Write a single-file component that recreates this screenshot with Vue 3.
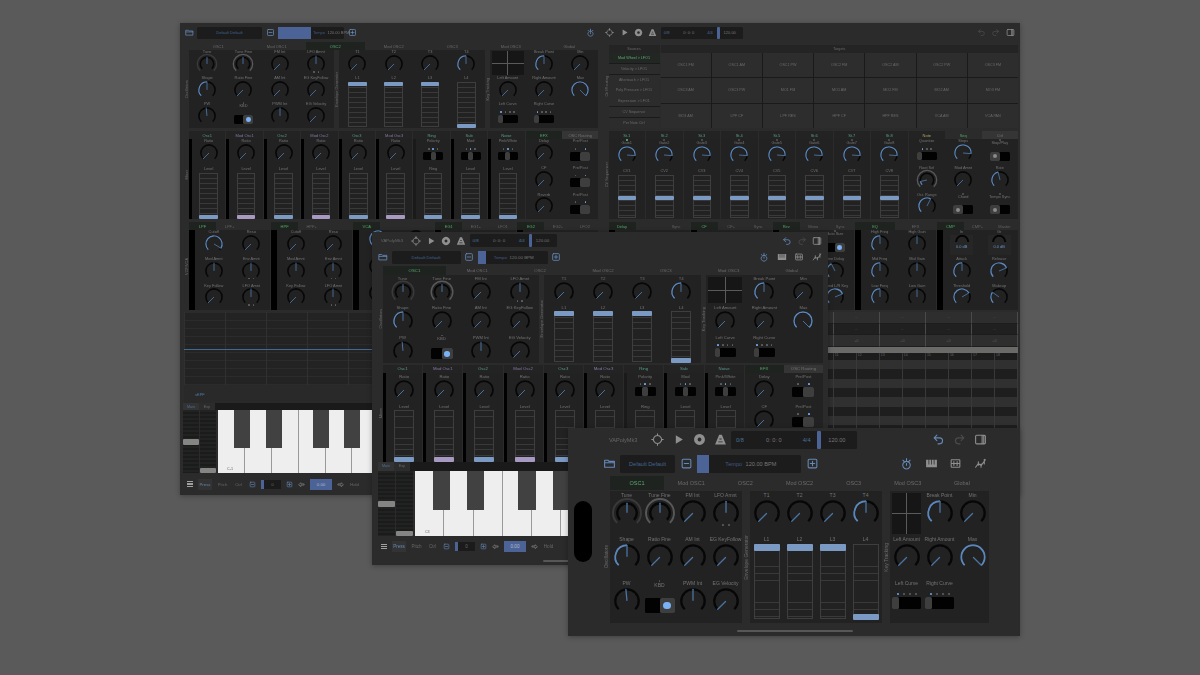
<script setup>
const K = (k, v = 0, o = {}) => ({ type: 'knob', k, v, ...o })
const F = (k, pos, tone = 'blue', o = {}) => ({ type: 'fader', k, pos, tone, ...o })
const T = (k, pos, o = {}) => ({ type: 'toggle', k, pos, ...o })
const DOTS2 = { under: [0, 0] }

const icons = {
  folder: 'M3 6h6l2 2h10v11H3z M3 10.5h18',
  minus: 'M6 4h12a2 2 0 0 1 2 2v12a2 2 0 0 1-2 2H6a2 2 0 0 1-2-2V6a2 2 0 0 1 2-2z M8 12h8',
  plus: 'M6 4h12a2 2 0 0 1 2 2v12a2 2 0 0 1-2 2H6a2 2 0 0 1-2-2V6a2 2 0 0 1 2-2z M8 12h8 M12 8v8',
  loop: 'M12 4.5a7.5 7.5 0 1 1-.01 0z M12 1.5v3 M12 19.5v3 M1.5 12h3 M19.5 12h3',
  undo: 'M9 4L4 9l5 5 M4 9h10a5.500 5.500 0 0 1 0 11h-3',
  redo: 'M15 4l5 5-5 5 M20 9H10a5.500 5.500 0 0 0 0 11h3',
  panel: 'M5 4h14a2 2 0 0 1 2 2v12a2 2 0 0 1-2 2H5a2 2 0 0 1-2-2V6a2 2 0 0 1 2-2z M15 4v16 M18 4v16',
  timer: 'M12 8a7 7 0 1 1-.01 0z M12 8V3 M5.500 6l2.500 2.500 M18.500 6L16 8.500 M12 15v-3',
  boxes: 'M5 5h14a1 1 0 0 1 1 1v12a1 1 0 0 1-1 1H5a1 1 0 0 1-1-1V6a1 1 0 0 1 1-1z M4 12h16 M9 8.500v7 M15 8.500v7',
  auto: 'M3 19l5-7 5 4 8-11 M8 9v6 M13 13v6 M19 4v9',
  left: 'M3 12l7-6v4h11v4H10v4z',
  right: 'M21 12l-7-6v4H3v4h11v4z',
}
const solids = {
  play: 'M7 4l13 8-13 8z',
  rec: 'M12 2a10 10 0 1 0 .01 0z M12 8.500a3.500 3.500 0 1 1-.01 0z',
  metro: 'M9.500 3h5L22 21H2z M8 15.500h8v1.800H8z M10 10h4v1.800h-4z',
  piano: 'M2 5h20v14H2z M6.500 5h1.400v9H6.500z M11.300 5h1.400v9h-1.400z M16.100 5h1.400v9h-1.400z',
}
const ic = (i, cls = '', c = '') => ({ i, cls, c })

const barLeft = [ic('folder', '', 'blue'), { kind: 'preset' }, ic('minus', '', 'blue'), { kind: 'tempo' }, ic('plus', '', 'blue')]
const transportGroup = [ic('loop', 'wide'), ic('play', 'wide'), ic('rec', 'wide'), ic('metro', 'wide'), { kind: 'trans' }]
const undoGroup = [ic('undo', 'wide', 'dim'), ic('redo', 'wide', 'dim'), ic('panel', 'wide')]
const undoGroupActive = [ic('undo', 'wide', 'blue'), ic('redo', 'wide', 'dim'), ic('panel', 'wide')]
const rightIcons = [ic('timer', '', 'blue'), ic('piano', 'wide'), ic('boxes', 'wide'), ic('auto', 'wide')]

const oscCells = [
  K('Tune', 0.5, { ring: 'faint' }), K('Tune Fine', 0.5, { ring: 'strong' }), K('FM Int'), K('LFO Amnt', 0.5, DOTS2),
  K('Shape', 0.5, { arc: 1 }), K('Ratio Fine'), K('AM Int'), K('EG KeyFollow'),
  K('PW', 0.48), T('KBD', 'r', { size: 'lg', led: 1 }), K('PWM Int', 0.5), K('EG Velocity'),
]
const envCells = [
  K('T1'), K('T2'), K('T3'), K('T4', 0.5, { arc: 1 }),
  F('L1', 'top', 'blue', { span: 1 }), F('L2', 'top', 'blue', { span: 1 }), F('L3', 'top', 'blue', { span: 1 }), F('L4', 'bot', 'blue', { span: 1 }),
]
const keyCells = [
  { type: 'xy' }, K('Break Point', 0.5, { arc: 1 }), K('Min'),
  K('Left Amount'), K('Right Amount'), K('Max', 1, { arc: 1 }),
  T('Left Curve', 'l', { dots: [1, 0, 0, 0] }), T('Right Curve', 'l', { dots: [1, 0, 0, 0] }), { type: 'empty' },
]
const oscRow = {
  kind: 'row', cls: 'sec-osc',
  parts: [
    { label: 'Oscillators', f: 'f4', cols: 4, rows: 'r3', cells: oscCells },
    { label: 'Envelope Generator', f: 'f4', cols: 4, rows: 'r3', cells: envCells },
    { label: 'Key Tracking', f: 'f3', cols: 3, rows: 'r3', cells: keyCells },
  ],
}
const oscTabs = (on) => ({
  kind: 'tabs',
  items: ['OSC1', 'Mod OSC1', 'OSC2', 'Mod OSC2', 'OSC3', 'Mod OSC3', 'Global'].map((t) => ({ t, on: t === on })),
})

const chan = (t, c, tone, first) => ({
  f: 'f1', strip: 'thin', tabs: [{ t, c }], cols: 1, rows: 'rc',
  cells: [first, F('Level', 'bot', tone)],
})
const mixerParts = () => {
  const list = [
    chan('Osc1', 'teal', 'blue', K('Ratio')), chan('Mod Osc1', 'purple', 'purple', K('Ratio')),
    chan('Osc2', 'teal', 'blue', K('Ratio')), chan('Mod Osc2', 'purple', 'purple', K('Ratio')),
    chan('Osc3', 'teal', 'blue', K('Ratio')), chan('Mod Osc3', 'purple', 'purple', K('Ratio')),
    { f: 'f1', strip: 'faint', tabs: [{ t: 'Ring', c: 'teal' }], cols: 1, rows: 'rc', cells: [T('Polarity', 'm', { dots: [0, 1, 0] }), F('Ring', 'bot')] },
    chan('Sub', 'teal', 'blue', T('Mod', 'm', { dots: [0, 1, 0] })),
    chan('Noise', 'teal', 'blue', T('Pink/White', 'm', { dots: [0, 1, 0] })),
    {
      f: 'f2', tabs: [{ t: 'EFX', c: 'green', on: 1 }, { t: 'OSC Routing', c: 'lite' }], cols: 2, rows: 'r3',
      cells: [
        K('Delay'), T('Pre/Post', 'r', { dots: [0, 1], size: 'md' }),
        K('CF'), T('Pre/Post', 'r', { dots: [0, 1], size: 'md' }),
        K('Reverb'), T('Pre/Post', 'r', { dots: [0, 1], size: 'md' }),
      ],
    },
  ]
  list[0].label = 'Mixer'
  return list
}
const mixRow = () => ({ kind: 'row', cls: 'sec-mix tight', parts: mixerParts() })

const filterCells = (v, arc) => [
  K('Cutoff', v, { arc }), K('Reso'), K('Mod Amnt', 0.5), K('Env Amnt', 0.5, DOTS2), K('Key Follow'), K('LFO Amnt', 0.5, DOTS2),
]
const shut = (tabs, cells = []) => ({ f: 'f1', strip: 'wide', tabs, cols: 2, rows: 'r3', cells })
const act = (t) => ({ t, c: 'green', on: 1 })
const filterRow = {
  kind: 'row', cls: 'sec-mix tight',
  parts: [
    { ...shut([act('LPF'), { t: 'LPF+' }, { t: '' }], filterCells(0.95, 1)), label: 'VCF/VCA' },
    shut([act('HPF'), { t: 'HPF+' }, { t: '' }], filterCells(0)),
    shut([act('VCA'), { t: '' }, { t: '' }], [K('', 0.6, { arc: 1 }), K('', 0), K('', 0.5), K('', 0.5), K('', 0), K('', 0)]),
    shut([act('EG1'), { t: 'EG1+' }, { t: 'LFO1' }]),
    shut([act('EG2'), { t: 'EG2+' }, { t: 'LFO2' }]),
  ],
}
const graph = { kind: 'graph' }
const lane = { kind: 'lane' }
const keyboard = (note) => ({
  kind: 'keyboard', note,
  whites: Array.from({ length: 8 }),
  blacks: [0.6, 1.78, 3.53, 4.7, 6.6, 7.78],
})
const playBar = { kind: 'playbar' }

const sources = ['Mod Wheel > LFO1', 'Velocity > LFO1', 'Aftertouch > LFO1', 'Poly Pressure > LFO1', 'Expression > LFO1', 'CV Sequence', 'Per Note Ctrl']
const targets = ['OSC1 FM', 'OSC1 AM', 'OSC1 PW', 'OSC2 FM', 'OSC2 AM', 'OSC2 PW', 'OSC3 FM', 'OSC3 AM', 'OSC3 PW', 'MO1 FM', 'MO1 AM', 'MO2 FM', 'MO2 AM', 'MO3 FM', 'MO3 AM', 'LPF CF', 'LPF RES', 'HPF CF', 'HPF RES', 'VCA AM', 'VCA PAN']

const seqParts = () => {
  const list = [1, 2, 3, 4, 5, 6, 7, 8].map((n) => ({
    f: 'f1', tabs: [{ t: 'St.' + n, c: 'teal' }], cols: 1, rows: 'rs',
    cells: [K('Gate' + n, 0.85, { arc: 1, led: n === 1 ? 'on' : 'off' }), F('CV' + n, 'mid')],
  }))
  list[0].label = 'CV Sequencer'
  list.push({
    f: 'f3', tabs: [{ t: 'Note', c: 'yellow' }, { t: 'Seq', c: 'green' }, { t: 'Ctrl', c: 'lite' }], cols: 3, rows: 'r3',
    cells: [
      T('Quantize', 'l', { dots: [1, 0, 0] }), K('Steps', 0.85, { arc: 1 }), T('Stop/Play', 'l', { size: 'md', led: 1, dim: 1 }),
      K('Root Sel', 0.12, { ring: 'strong', arc: 1 }), K('Mod Amnt'), K('Rate', 0.45, { arc: 1 }),
      K('Oct. Range', 0.6, { arc: 1 }), T('Chord', 'l', { size: 'md', led: 1, dim: 1 }), T('Tempo Sync', 'l', { size: 'md', led: 1, dim: 1 }),
    ],
  })
  return list
}
const eq = {
  f: 'f1', strip: 'wide', tabs: [act('EQ'), { t: 'EFX' }], cols: 2, rows: 'r3',
  cells: [K('High Freq', 0.5, { arc: 1 }), K('High Gain', 0.5), K('Mid Freq', 0.5, { arc: 1 }), K('Mid Gain', 0.5), K('Low Freq', 0.5, { arc: 1 }), K('Low Gain', 0.5)],
}
const cmp = {
  f: 'f1', strip: 'wide', tabs: [act('CMP'), { t: 'CMP+' }, { t: 'Master' }], cols: 2, rows: 'r3',
  cells: [{ type: 'gauge', k: 'In', val: '0.0 dB' }, { type: 'gauge', k: 'Gr', val: '0.0 dB' }, K('Attack', 0.5, { arc: 1 }), K('Release', 0.75, { arc: 1 }), K('Threshold', 0.72, { arc: 1 }), K('Makeup', 0.3, { arc: 1 })],
}
const fxRow = {
  kind: 'row', cls: 'sec-mix tight',
  parts: [
    { ...shut([act('Delay'), { t: '' }, { t: 'Sync' }]), label: 'Effects' },
    shut([act('CF'), { t: 'CF+' }, { t: 'Sync' }]),
    shut([act('Rev'), { t: 'Mono' }, { t: 'Sync' }], [
      { type: 'empty' }, T('Auto Size', 'r', { size: 'lg', led: 1 }),
      { type: 'empty' }, K('Fine Delay', 0.4, { arc: 1 }),
      { type: 'empty' }, K('Sound L/R Key', 0.75, { arc: 1 }),
    ]),
    eq, cmp,
  ],
}
const table = { kind: 'table', cells: Array.from({ length: 27 }, (_, i) => (i > 17 ? '+0' : '--')) }
const roll = { kind: 'roll', heads: Array.from({ length: 18 }, (_, i) => String(i + 1)) }

const windows = [
  {
    cls: 'w1',
    bars: [[...barLeft, { kind: 'sp' }, ic('timer', '', 'blue'), ic('loop', 'wider'), ...transportGroup.slice(1), { kind: 'sp', cls: 'sp2' }, ...undoGroup]],
    columns: [
      [oscTabs('OSC2'), oscRow, mixRow(), filterRow, graph, lane, keyboard('C-1'), playBar],
      [{ kind: 'matrix' }, { kind: 'row', cls: 'sec-mix tight', parts: seqParts() }, fxRow, table, roll],
    ],
  },
  {
    cls: 'w2',
    bars: [
      [{ kind: 'title' }, ...transportGroup, { kind: 'sp' }, ...undoGroupActive],
      [...barLeft, { kind: 'sp' }, ...rightIcons],
    ],
    columns: [[oscTabs('OSC1'), oscRow, mixRow(), keyboard('C3'), playBar]],
    home: 1,
  },
  {
    cls: 'w3',
    pill: 1,
    bars: [
      [{ kind: 'title' }, ...transportGroup, { kind: 'sp' }, ...undoGroupActive],
      [...barLeft, { kind: 'sp' }, ...rightIcons],
    ],
    columns: [[oscTabs('OSC1'), oscRow]],
    home: 1,
  },
]

const polar = (r, a) => {
  const t = (a * Math.PI) / 180
  return [20 + r * Math.sin(t), 20 - r * Math.cos(t)]
}
const ang = (v) => -135 + 270 * v
const arc = (r, from, to) => {
  const a = ang(from)
  const b = ang(to)
  const [x1, y1] = polar(r, a)
  const [x2, y2] = polar(r, b)
  return `M${x1.toFixed(2)} ${y1.toFixed(2)}A${r} ${r} 0 ${b - a > 180 ? 1 : 0} 1 ${x2.toFixed(2)} ${y2.toFixed(2)}`
}
const pointer = (v, r) => {
  const [x1, y1] = polar(1, ang(v))
  const [x2, y2] = polar(r, ang(v))
  return `M${x1.toFixed(2)} ${y1.toFixed(2)}L${x2.toFixed(2)} ${y2.toFixed(2)}`
}
const radius = (c) => (c.ring ? 15 : 18)
</script>

<template>
  <div class="desk">
    <section v-for="w in windows" :key="w.cls" class="win" :class="w.cls">
      <div v-if="w.pill" class="pill"></div>
      <div v-for="(bar, bi) in w.bars" :key="bi" class="bar" :class="'bar' + (bi + 1)">
        <template v-for="(it, ii) in bar" :key="ii">
          <svg v-if="it.i" class="ic" :class="[it.cls, it.c]" viewBox="0 0 24 24">
            <path v-if="solids[it.i]" class="solid" fill-rule="evenodd" :d="solids[it.i]" />
            <path v-else class="line" :d="icons[it.i]" />
          </svg>
          <span v-else-if="it.kind === 'sp'" class="sp" :class="it.cls"></span>
          <span v-else-if="it.kind === 'title'" class="title">VAPolyMk3</span>
          <span v-else-if="it.kind === 'preset'" class="preset">Default Default</span>
          <span v-else-if="it.kind === 'tempo'" class="tempo">
            <i class="tfill"></i>
            <span class="ttext"><b>Tempo</b><span>120.00 BPM</span></span>
          </span>
          <span v-else-if="it.kind === 'trans'" class="trans">
            <b>0/8</b><span>0: 0: 0</span><b>4/4</b><i></i><span>120.00</span>
          </span>
        </template>
      </div>

      <div class="cols">
        <div v-for="(col, ci) in w.columns" :key="ci" class="col">
          <template v-for="(s, si) in col" :key="si">
            <div v-if="s.kind === 'tabs'" class="tabs">
              <span v-for="t in s.items" :key="t.t" class="tab" :class="{ on: t.on }">{{ t.t }}</span>
            </div>

            <div v-else-if="s.kind === 'row'" class="row" :class="s.cls">
              <template v-for="(m, mi) in s.parts" :key="mi">
                <div v-if="m.label" class="side"><span>{{ m.label }}</span></div>
                <div class="mod" :class="m.f">
                  <div v-if="m.tabs" class="mtabs">
                    <span v-for="(t, ti) in m.tabs" :key="ti" class="mtab" :class="[t.c, { on: t.on }]">{{ t.t }}</span>
                  </div>
                  <div class="mbody">
                    <i v-if="m.strip" class="strip" :class="m.strip"></i>
                    <div class="grid" :class="[m.rows, 'c' + m.cols]">
                      <div v-for="(c, i) in m.cells" :key="i" class="cell" :class="{ span: c.span }">
                        <i v-if="c.led" class="led" :class="c.led"></i>
                        <span v-if="c.k" class="lab">{{ c.k }}</span>

                        <svg v-if="c.type === 'knob'" class="knob" viewBox="0 0 40 40">
                          <path v-if="c.ring" class="kring" :class="c.ring" :d="arc(21.5, 0, 1)" />
                          <path class="ktrack" :d="arc(radius(c), 0, 1)" />
                          <path v-if="c.arc" class="kval" :d="arc(radius(c), 0, c.v)" />
                          <path class="kptr" :d="pointer(c.v, radius(c))" />
                        </svg>

                        <div v-else-if="c.type === 'fader'" class="fader">
                          <i class="thumb" :class="[c.pos, c.tone]"></i>
                        </div>

                        <template v-else-if="c.type === 'toggle'">
                          <div v-if="c.dots" class="dots" :class="c.size">
                            <i v-for="(d, di) in c.dots" :key="di" :class="{ lit: d }"></i>
                          </div>
                          <div class="tg" :class="[c.size, 'pos-' + c.pos, { nod: !c.dots }]">
                            <i class="tknob"><em v-if="c.led" :class="{ dim: c.dim }"></em></i>
                          </div>
                        </template>

                        <div v-else-if="c.type === 'xy'" class="xy">
                          <i></i><i></i><i></i><i></i>
                        </div>

                        <div v-else-if="c.type === 'gauge'" class="gauge">
                          <svg viewBox="0 0 40 22"><path d="M5 17A15 15 0 0 1 35 17" /></svg>
                          <span>{{ c.val }}</span>
                        </div>

                        <div v-if="c.under" class="dots under">
                          <i v-for="(d, di) in c.under" :key="di"></i>
                        </div>
                      </div>
                    </div>
                  </div>
                </div>
              </template>
            </div>

            <div v-else-if="s.kind === 'matrix'" class="matrix">
              <div class="side"><span>Ctrl Routing</span></div>
              <div class="msrc">
                <span class="mh">Sources</span>
                <span v-for="(x, i) in sources" :key="x" class="ms" :class="{ on: i === 0 }">{{ x }}</span>
              </div>
              <div class="mtg">
                <span class="mh">Targets</span>
                <div class="mcells"><span v-for="x in targets" :key="x">{{ x }}</span></div>
              </div>
            </div>

            <div v-else-if="s.kind === 'graph'" class="graph"></div>
            <div v-else-if="s.kind === 'lane'" class="lane"><span>sEPF</span></div>

            <div v-else-if="s.kind === 'keyboard'" class="kb">
              <div class="kbtabs"><span class="on">Main</span><span>Exp</span></div>
              <div class="kbbody">
                <div class="slider"><i class="sl-mid"></i></div>
                <div class="slider"><i class="sl-bot"></i></div>
                <div class="keys">
                  <span v-for="(x, i) in s.whites" :key="i" class="white"><em v-if="i === 0">{{ s.note }}</em></span>
                  <i v-for="b in s.blacks" :key="b" class="black" :style="{ left: `calc(var(--kw) * ${b})` }"></i>
                </div>
              </div>
            </div>

            <div v-else-if="s.kind === 'playbar'" class="playbar">
              <span class="menu"><i></i><i></i><i></i></span>
              <span class="pb on">Press</span><span class="pb">Pitch</span><span class="pb">Ctrl</span>
              <svg class="ic blue" viewBox="0 0 24 24"><path class="line" :d="icons.minus" /></svg>
              <i class="pbblue"></i><span class="pbbox">0</span>
              <svg class="ic blue" viewBox="0 0 24 24"><path class="line" :d="icons.plus" /></svg>
              <svg class="ic" viewBox="0 0 24 24"><path class="line" :d="icons.left" /></svg>
              <span class="pbval">0.00</span>
              <svg class="ic" viewBox="0 0 24 24"><path class="line" :d="icons.right" /></svg>
              <span class="pb">Hold</span>
            </div>

            <div v-else-if="s.kind === 'table'" class="table">
              <span v-for="(x, i) in s.cells" :key="i">{{ x }}</span>
            </div>

            <div v-else-if="s.kind === 'roll'" class="roll">
              <div class="rbar"></div>
              <div class="rhead"><span v-for="h in s.heads" :key="h">{{ h }}</span></div>
              <div class="rbody"></div>
            </div>
          </template>
        </div>
      </div>
      <div v-if="w.home" class="home"></div>
    </section>
  </div>
</template>

<style scoped>
.desk {
  position: relative;
  width: 1200px;
  height: 675px;
  overflow: hidden;
  background: #5a5a5a;
  font-family: "Liberation Sans", Arial, sans-serif;
}
i, em, b { font-style: normal; font-weight: normal; }

/* each window sits on the desktop at its own place */
.win {
  position: absolute;
  display: flex;
  flex-direction: column;
  overflow: hidden;
  background: #2b2b2b;
  box-shadow: 0 1px 5px rgba(0, 0, 0, .3);
  filter: blur(.65px);
}
.w1 {
  left: 180px; top: 23px; width: 840px; height: 472px;
  --pad-l: 4px; --pad-r: 2px; --k: 18px; --lf: 3.9px; --row: 26px; --side: 5px; --tab: 8px;
  --mixh: 88px; --sg: 3px; --cp: .4px; --kg: 0px; --fw: 16.5px; --th: 4px; --fl: 5px;
  --tw: 20px; --tht: 8px; --tk: 5px; --lgw: 19px; --lgh: 9px; --mdw: 20px; --mdh: 9px; --d: 1.5px; --dg: 2.800px;
  --lgmt: 6px; --dm: 4px; --bh1: 19px; --gap: 3.5px; --wa: 1.900px; --wb: 0px; --ic: 9px; --ctl: 12px; --preset: 65px; --tempo: 66px;
  --tfill: 33px; --trans: 82px; --title: 28px; --bf: 4px; --tabf: 4px; --rc: 28px; --rs: 30px;
  --kbt: 7px; --kbh: 63px; --kw: 26.900px; --sl: 16px; --pbh: 22px; --pbf: 4.300px;
}
.w2 {
  left: 372px; top: 232px; width: 456px; height: 333px;
  --pad-l: 6px; --pad-r: 5px; --k: 20px; --lf: 4.200px; --row: 29.300px; --side: 5px; --tab: 8px;
  --mixh: 97px; --sg: 2px; --cp: 1px; --kg: 1px; --fw: 18px; --th: 4.500px; --fl: 5.600px;
  --tw: 21px; --tht: 9px; --tk: 5.500px; --lgw: 22px; --lgh: 11px; --mdw: 22px; --mdh: 10px; --d: 1.700px; --dg: 3.100px;
  --lgmt: 7px; --dm: 4.500px; --bh1: 17px; --bh2: 16px; --gap: 3.5px; --wa: 1.500px; --wb: 4.200px; --ic: 10px; --ctl: 13px; --preset: 69px; --tempo: 70px;
  --tfill: 8px; --trans: 87px; --title: 28px; --bf: 4.400px; --tabf: 4.300px; --rc: 30px;
  --kbt: 9px; --kbh: 65px; --kw: 29.300px; --sl: 17px; --pbh: 21px; --pbf: 4.600px;
}
.w3 {
  left: 568px; top: 428px; width: 452px; height: 208px;
  --pad-l: 34px; --pad-r: 31px; --k: 26px; --lf: 5px; --row: 44px; --side: 8px; --tab: 14px;
  --mixh: 90px; --sg: 2px; --cp: 1px; --kg: 2px; --fw: 24px; --th: 6.500px; --fl: 7.200px;
  --tw: 29px; --tht: 12px; --tk: 7px; --lgw: 30px; --lgh: 15px; --mdw: 30px; --mdh: 15px; --d: 2px; --dg: 4px;
  --lgmt: 10px; --dm: 6.500px; --bh1: 23px; --bh2: 25px; --gap: 4.5px; --wa: 3.200px; --wb: 7px; --ic: 13px; --ctl: 18px; --preset: 55px; --tempo: 104px;
  --tfill: 12px; --trans: 126px; --title: 41.300px; --bf: 5.600px; --tabf: 5.500px; --rc: 30px;
  --kbt: 9px; --kbh: 65px; --kw: 30px; --sl: 17px; --pbh: 21px; --pbf: 5px;
}

.pill {
  position: absolute;
  left: 6px; top: 73px;
  width: 18px; height: 61px;
  border-radius: 9px;
  background: #000;
}
.home {
  position: absolute;
  bottom: 4px; right: 167px;
  width: 116px; height: 2px;
  border-radius: 1px;
  background: #575757;
}
.w2 .home { right: 70px; width: 215px; bottom: 3px; }

/* top bars */
.bar {
  display: flex;
  align-items: center;
  flex: none;
  gap: var(--gap);
}
.w1 .bar { padding: 0 5.500px 0 4.500px; }
.w2 .bar { padding: 0 6px; }
.w3 .bar { padding: 0 33.500px 0 34.500px; }
.bar1 { height: var(--bh1); }
.bar2 { height: var(--bh2); }
.sp { flex: 1; }
.sp2 { flex: 1.010; }
.ic { width: var(--ic); height: var(--ic); flex: none; color: #8f8f8f; overflow: visible; }
.ic.blue { color: #6489b8; }
.ic.dim { color: #4c4c4c; }
.line { fill: none; stroke: currentColor; stroke-width: 2; stroke-linejoin: round; stroke-linecap: round; }
.solid { fill: currentColor; }
.bar1 .wide { margin-left: var(--wa); }
.bar2 .wide { margin-left: var(--wb); }
.bar1 .wider { margin-left: 6.500px; }
.title { width: var(--title); text-align: center; color: #666; font-size: var(--bf); white-space: nowrap; flex: none; }
.preset {
  width: var(--preset); height: var(--ctl); flex: none;
  display: flex; align-items: center; justify-content: center;
  background: #1c1c1d; border-radius: 1.500px; color: #42648f; font-size: var(--bf);
}
.tempo {
  width: var(--tempo); height: var(--ctl); flex: none;
  display: flex; align-items: stretch;
  background: #1c1c1d; border-radius: 1.500px; color: #757575; font-size: var(--bf);
}
.tfill { width: var(--tfill); background: #4c6397; flex: none; }
.ttext { flex: 1; display: flex; align-items: center; justify-content: center; gap: .6em; padding-right: 8%; white-space: nowrap; }
.w1 .ttext { justify-content: flex-start; padding: 0 0 0 2px; }
.ttext b { color: #42597f; }
.trans {
  width: var(--trans); height: var(--ctl); flex: none;
  display: grid;
  grid-template-columns: 14% 40% 12% 8% 20%;
  align-items: center; justify-items: center;
  background: #1c1c1d; border-radius: 1.500px; color: #757575; font-size: var(--bf);
}
.trans b { color: #4a7099; }
.trans i { width: 40%; height: 100%; background: #4c6397; border-radius: 1px; }

/* columns */
.cols { flex: 1; min-height: 0; display: flex; gap: 5px; padding: 0 var(--pad-r) 0 var(--pad-l); }
.col { flex: 1; min-width: 0; display: flex; flex-direction: column; }

.tabs { display: flex; flex: none; height: var(--tab); margin-left: var(--side); }
.w2 .tabs { margin-top: 1px; height: 9px; }
.w3 .tabs { margin-bottom: 1px; }
.tab { flex: 1; display: flex; align-items: center; justify-content: center; color: #6a6a6a; font-size: var(--tabf); }
.tab.on { background: #1e2320; color: #5aa672; }

.row { display: flex; flex: none; }
.sec-osc { height: calc(var(--row) * 3); }
.sec-mix { height: var(--mixh); margin-top: var(--sg); }
.tight { gap: 1px; }
.side { width: var(--side); flex: none; display: flex; align-items: center; justify-content: center; }
.side span {
  writing-mode: vertical-rl; transform: rotate(180deg);
  color: #6a6a6a; font-size: var(--lf); white-space: nowrap;
}
.tight .side { margin-right: -1px; }

.mod { min-width: 0; display: flex; flex-direction: column; }
.f1 { flex: 1 1 0; }
.f2 { flex: 2 1 0; }
.f3 { flex: 3 1 0; }
.f4 { flex: 4 1 0; }
.mtabs { display: flex; flex: none; height: var(--tab); }
.mtab { flex: 1 1 0; display: flex; align-items: center; justify-content: center; color: #626262; font-size: var(--tabf); white-space: nowrap; }
.tight .mtab.teal, .tight .mtab.purple { background: #222322; }
.mtab.on { background: #1e2320; }
.mtab.teal { color: #5a9e8e; }
.mtab.purple { color: #8a7aa8; }
.mtab.green { color: #54a566; }
.mtab.yellow { color: #aca763; background: #222322; }
.mtab.lite { background: #353535; color: #727272; }
.mbody { flex: 1; min-height: 0; display: flex; background: #212221; }
.strip { flex: none; background: #000; }
.strip.thin { width: 3px; }
.strip.faint { width: 3px; background: #1a1a1a; }
.strip.wide { width: 6px; }
.grid { flex: 1; min-width: 0; display: grid; }
.c1 { grid-template-columns: 1fr; }
.c2 { grid-template-columns: 1fr 1fr; }
.c3 { grid-template-columns: repeat(3, 1fr); }
.c4 { grid-template-columns: repeat(4, 1fr); }
.r3 { grid-template-rows: repeat(3, 1fr); }
.rc { grid-template-rows: var(--rc) 1fr; }
.rs { grid-template-rows: var(--rs, var(--rc)) 1fr; }

.cell { display: flex; flex-direction: column; align-items: center; padding-top: var(--cp); min-height: 0; min-width: 0; }
.cell.span { grid-row: span 2; }
.lab { color: #747474; font-size: var(--lf); line-height: 1.2; white-space: nowrap; flex: none; }
.led { width: 1.800px; height: 1.800px; border-radius: 50%; background: #555; flex: none; }
.led.on { background: #5fc07a; }

.knob { width: var(--k); height: var(--k); flex: none; margin-top: var(--kg); overflow: visible; fill: none; }
.kring { stroke-width: 3; }
.kring.faint { stroke: #3a3a3a; }
.kring.strong { stroke: #585858; }
.ktrack { stroke: #070707; stroke-width: 3.500; }
.kval { stroke: #5d86b8; stroke-width: 3; }
.kptr { stroke: #4c74a3; stroke-width: 2; stroke-linecap: round; }

.fader {
  position: relative;
  flex: 1;
  width: var(--fw);
  min-height: 0;
  margin-top: 1px;
  margin-bottom: 1px;
  border: 1px solid #3d3e3d;
  background: repeating-linear-gradient(to bottom, transparent 0, transparent calc(var(--fl) - .7px), #383938 calc(var(--fl) - .7px), #383938 var(--fl));
}
.w3 .fader { margin-top: 2px; margin-bottom: 4px; }
.thumb { position: absolute; left: -1px; right: -1px; height: var(--th); border-radius: 1px; background: #7a99c3; }
.thumb.purple { background: #a799c2; }
.thumb.top { top: -1px; }
.thumb.bot { bottom: -2px; }
.thumb.mid { top: 48%; }

.dots { display: flex; gap: var(--dg); justify-content: center; margin-top: var(--dm); height: var(--d); flex: none; }
.dots.md { gap: calc(var(--mdw) / 2 - var(--d)); }
.dots i { width: var(--d); height: var(--d); border-radius: 50%; background: #626262; }
.dots i.lit { background: #6fa6ea; }
.dots.under { margin-top: -2px; }
.tg {
  display: flex; flex: none;
  width: var(--tw); height: var(--tht);
  margin-top: 2px;
  background: #020202; border-radius: 1.500px;
}
.tg.lg { width: var(--lgw); height: var(--lgh); }
.tg.md { width: var(--mdw); height: var(--mdh); }
.tg.nod { margin-top: var(--lgmt); }
.pos-m { justify-content: center; }
.pos-r { justify-content: flex-end; }
.tknob { width: var(--tk); height: 100%; background: #3e3e3e; border-radius: 1.500px; display: flex; align-items: center; justify-content: center; }
.lg .tknob, .md .tknob { width: 50%; }
.tknob em { width: 50%; aspect-ratio: 1; border-radius: 50%; background: #79b2f5; }
.tknob em.dim { background: #8a8a8a; width: 40%; }

.xy { width: 88%; flex: 1; margin: 1px 0 1px; display: grid; grid-template-columns: 1fr 1fr; grid-template-rows: 1fr 1fr; gap: 1px; background: #5a5a5a; }
.xy i { background: #161616; }

.gauge { width: 62%; display: flex; flex-direction: column; align-items: center; color: #6b93c4; font-size: var(--lf); background: #262626; flex: 1; margin-bottom: 2px; }
.gauge svg { width: 70%; fill: none; stroke: #050505; stroke-width: 5; }

/* matrix */
.matrix { display: flex; flex: none; height: 83px; margin-top: 3px; font-size: 3.700px; color: #6a6a6a; }
.msrc { width: 51px; flex: none; display: flex; flex-direction: column; gap: .5px; background: #1a1a1a; }
.mtg { flex: 1; display: flex; flex-direction: column; gap: .5px; background: #1a1a1a; margin-left: 1px; }
.mh { height: 7.500px; flex: none; display: flex; align-items: center; justify-content: center; background: #242424; }
.ms { flex: 1; display: flex; align-items: center; justify-content: center; background: #2c2c2c; white-space: nowrap; }
.ms.on { background: #232723; color: #5cab75; }
.mcells { flex: 1; display: grid; grid-template-columns: repeat(7, 1fr); grid-template-rows: repeat(3, 1fr); gap: 1px; }
.mcells span { display: flex; align-items: center; justify-content: center; background: #2d2d2d; }

/* bottom of the big window */
.graph {
  flex: none; height: 73px; margin-top: 2px;
  background-color: #222322;
  background-image:
    linear-gradient(to bottom, transparent 37px, #3f6a8f 37px, #3f6a8f 38px, transparent 38px),
    repeating-linear-gradient(to right, #2f302f 0, #2f302f .7px, transparent .7px, transparent 20.500px),
    repeating-linear-gradient(to bottom, #2a2b2a 0, #2a2b2a .7px, transparent .7px, transparent 8px);
}
.lane { flex: none; height: 18px; display: flex; align-items: center; padding-left: 11px; background: #292929; color: #4d7aa8; font-size: 4px; }
.kb { flex: none; }
.w1 .kb { margin-left: -1px; }
.kbtabs { display: flex; height: var(--kbt); background: #191a19; }
.kbtabs span { width: 16px; display: flex; align-items: center; justify-content: center; background: #2c2c2c; color: #666; font-size: 3.700px; }
.kbtabs .on { background: #333; color: #4d6f98; }
.kbbody { display: flex; gap: 1px; height: var(--kbh); }
.slider {
  position: relative; width: var(--sl); flex: none;
  background: repeating-linear-gradient(to bottom, #222 0, #222 2px, #1a1c1b 2px, #1a1c1b 4px);
}
.sl-mid, .sl-bot { position: absolute; left: 0; right: 0; height: 6px; background: #858583; border-radius: 1px; }
.sl-mid { top: 46%; }
.sl-bot { bottom: 0; height: 5px; }
.keys { position: relative; flex: 1; min-width: 0; display: flex; overflow: hidden; margin-left: 1px; }
.white {
  width: var(--kw); flex: none; position: relative;
  background: #eeeeee;
  border-right: 1.500px solid #999;
  box-sizing: border-box;
}
.white em { position: absolute; left: 35%; bottom: 2px; color: #666; font-size: 3.700px; }
.black { position: absolute; top: 0; width: calc(var(--kw) * .59); height: 60%; background: #414141; }
.playbar { flex: none; height: var(--pbh); display: flex; align-items: center; gap: 5px; color: #666; font-size: var(--pbf); padding-left: 3px; }
.playbar .ic { width: 7px; height: 7px; }
.menu { width: 6px; display: flex; flex-direction: column; gap: 1px; }
.menu i { height: 1.200px; background: #a0a0a0; }
.pb { width: 11px; text-align: center; }
.pb.on { color: #6587b2; background: #333; padding: 3px 0; width: 14px; }
.pbblue { width: 3px; height: 9px; background: #4c6397; margin-right: -5px; }
.pbbox { width: 17px; height: 9px; background: #1b1b1b; display: flex; align-items: center; justify-content: center; }
.pbval { width: 22px; height: 11px; display: flex; align-items: center; justify-content: center; background: #4c6397; color: #b4bacb; }

.table {
  flex: none; height: 35px; margin-top: 2px;
  display: grid;
  grid-template-columns: repeat(9, 1fr);
  grid-template-rows: repeat(3, 1fr);
  color: #5a5a5a; font-size: 3.800px;
  background: #2e2e2e;
}
.table span { display: flex; align-items: center; justify-content: center; border-right: 1px solid #4a4a4a; border-bottom: 1px solid #1d1d1d; }
.table span:nth-child(n + 10):nth-child(-n + 18) { background: #202020; }
.roll { flex: 1; min-height: 0; display: flex; flex-direction: column; }
.rbar { height: 6px; background: #6a6a68; }
.rhead { height: 7px; display: grid; grid-template-columns: repeat(18, 1fr); background: #1c1c1c; color: #666; font-size: 3.500px; }
.rhead span { border-right: 1px solid #383838; padding-left: 1px; }
.rbody {
  flex: 1;
  background-image:
    repeating-linear-gradient(to right, transparent 0, transparent calc(100% / 18 - 1px), #393939 calc(100% / 18 - 1px), #393939 calc(100% / 18)),
    repeating-linear-gradient(to bottom, #2f302f 0, #2f302f 9.300px, #1e1e1e 9.300px, #1e1e1e 18.600px);
}
</style>

<style>
html, body { margin: 0; background: #5a5a5a; }
</style>
